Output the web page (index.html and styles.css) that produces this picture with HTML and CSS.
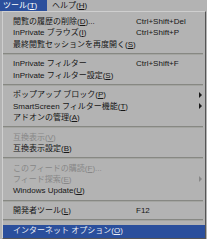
FILE: index.html
```html
<!DOCTYPE html>
<html lang="ja">
<head>
<meta charset="utf-8">
<link rel="stylesheet" href="styles.css">
</head>
<body>
<div class="menubar">
  <span class="top active">ツール(<u>T</u>)</span>
  <span class="top">ヘルプ(<u>H</u>)</span>
</div>
<div class="menu">
  <div class="item"><span class="label">閲覧の履歴の削除(<u>D</u>)...</span><span class="key">Ctrl+Shift+Del</span><span class="sub"></span></div>
  <div class="item"><span class="label">InPrivate ブラウズ(<u>I</u>)</span><span class="key">Ctrl+Shift+P</span><span class="sub"></span></div>
  <div class="item"><span class="label">最終閲覧セッションを再度開く(<u>S</u>)</span><span class="key"></span><span class="sub"></span></div>
  <div class="sep"></div>
  <div class="item"><span class="label">InPrivate フィルター</span><span class="key">Ctrl+Shift+F</span><span class="sub"></span></div>
  <div class="item"><span class="label">InPrivate フィルター設定(<u>S</u>)</span><span class="key"></span><span class="sub"></span></div>
  <div class="sep"></div>
  <div class="item"><span class="label">ポップアップ ブロック(<u>P</u>)</span><span class="key"></span><span class="sub"><i class="arrow"></i></span></div>
  <div class="item"><span class="label">SmartScreen フィルター機能(<u>T</u>)</span><span class="key"></span><span class="sub"><i class="arrow"></i></span></div>
  <div class="item"><span class="label">アドオンの管理(<u>A</u>)</span><span class="key"></span><span class="sub"></span></div>
  <div class="sep"></div>
  <div class="item disabled"><span class="label">互換表示(<u>V</u>)</span><span class="key"></span><span class="sub"></span></div>
  <div class="item"><span class="label">互換表示設定(<u>B</u>)</span><span class="key"></span><span class="sub"></span></div>
  <div class="sep"></div>
  <div class="item disabled"><span class="label">このフィードの購読(<u>F</u>)...</span><span class="key"></span><span class="sub"></span></div>
  <div class="item disabled"><span class="label">フィード探索(<u>E</u>)</span><span class="key"></span><span class="sub"><i class="arrow"></i></span></div>
  <div class="item"><span class="label">Windows Update(<u>U</u>)</span><span class="key"></span><span class="sub"></span></div>
  <div class="sep"></div>
  <div class="item"><span class="label">開発者ツール(<u>L</u>)</span><span class="key">F12</span><span class="sub"></span></div>
  <div class="sep"></div>
  <div class="item selected"><span class="label">インターネット オプション(<u>O</u>)</span><span class="key"></span><span class="sub"></span></div>
</div>
</body>
</html>
```

FILE: styles.css
```css
html, body {
  margin: 0;
  padding: 0;
  background: #b3b3b3;
}

body {
  width: 207px;
  height: 239px;
  overflow: hidden;
  font-family: "Liberation Sans", "Noto Sans CJK JP", sans-serif;
  font-size: 8px;
  color: #161616;
}

u {
  text-decoration: underline;
  text-underline-offset: 1px;
}

.menubar {
  display: flex;
  height: 11px;
  line-height: 11px;
}

.top {
  padding: 0 3px 0 5px;
}

.top.active {
  width: 37px;
  padding: 0 7px 0 3px;
  background: #2b4f9c;
  color: #ffffff;
}

.menu {
  margin-left: 2px;
  width: 202px;
  border: 1px solid;
  border-color: #cfcfcf #555555 #555555 #cfcfcf;
  padding-top: 4px;
}

.item {
  display: grid;
  grid-template-columns: 123px 1fr 6px;
  height: 11.3px;
  line-height: 11.3px;
  padding: 0 3px 0 10px;
  white-space: nowrap;
}

.label, .key {
  overflow: visible;
}

.sub {
  display: flex;
  align-items: center;
  justify-content: flex-end;
}

.arrow {
  display: block;
  width: 0;
  height: 0;
  border-left: 3px solid #1a1a1a;
  border-top: 3px solid transparent;
  border-bottom: 3px solid transparent;
}

.disabled {
  color: #878787;
}

.disabled .arrow {
  border-left-color: #878787;
}

.selected {
  height: 13px;
  line-height: 12px;
  background: #2b4f9c;
  color: #e8ecf5;
}

.sep {
  display: flex;
  align-items: center;
  height: 8.4px;
  padding-right: 2px;
}

.sep::before {
  content: "";
  flex: 1;
  height: 0;
  border-top: 1px solid #878883;
  border-bottom: 1px solid #a4a5a1;
}
```
